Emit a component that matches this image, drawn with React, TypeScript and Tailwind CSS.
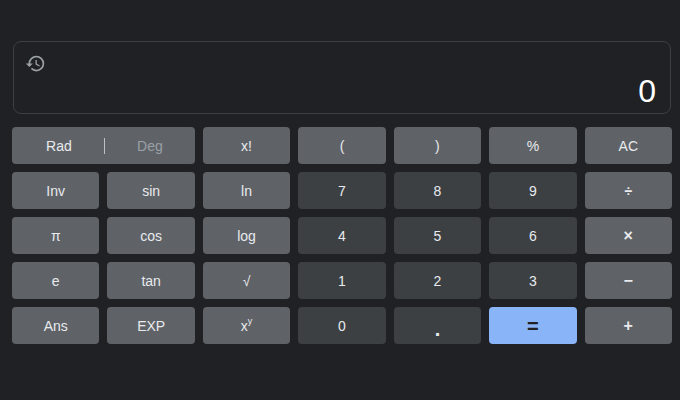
const light = "bg-[#5f6368] text-[#e8eaed]";
const dark = "bg-[#3c4043] text-[#e8eaed]";

type Key = { label: React.ReactNode; tone?: string; cls?: string };

function key(label: React.ReactNode, tone = light, cls = ""): Key {
  return { label, tone, cls };
}

const keys: Key[] = [
  key("x!"),
  key("("),
  key(")"),
  key("%"),
  key("AC"),
  key("Inv"),
  key("sin"),
  key("ln"),
  key("7", dark),
  key("8", dark),
  key("9", dark),
  key("÷", light, "font-bold"),
  key("π"),
  key("cos"),
  key("log"),
  key("4", dark),
  key("5", dark),
  key("6", dark),
  key("×", light, "font-bold text-[16px] pt-px"),
  key("e"),
  key("tan"),
  key("√"),
  key("1", dark),
  key("2", dark),
  key("3", dark),
  key("−", light, "font-bold text-[16px] pt-px"),
  key("Ans"),
  key("EXP"),
  key(
    <>
      x<sup className="text-[9px] -top-[5px]">y</sup>
    </>,
  ),
  key("0", dark),
  key(<span className="pt-[7px] text-[20px] font-bold">.</span>, dark),
  key(<span className="pt-px text-[20px] font-bold">=</span>, "bg-[#8ab4f8] text-[#202124]"),
  key("+", light, "font-bold text-[16px] pt-px"),
];

export default function App() {
  return (
    <main className="h-[400px] w-[680px] overflow-hidden bg-[#202124] pl-3 pr-2 pt-[41px] font-['Liberation_Sans',sans-serif] text-sm">
      <div className="mx-px mb-[13px] flex h-[73px] flex-col justify-between rounded-lg border border-[#3c4043] pl-[10px] pr-[14px] pb-[3px] pt-[10px]">
        <svg viewBox="0 0 24 24" className="h-[25px] w-[25px] -translate-x-px translate-y-px" fill="#9aa0a6">
          <path d="M13 3a9 9 0 0 0-9 9H1l3.89 3.89.07.14L9 12H6c0-3.87 3.13-7 7-7s7 3.13 7 7-3.13 7-7 7c-1.93 0-3.68-.79-4.94-2.06l-1.42 1.42A8.954 8.954 0 0 0 13 21a9 9 0 0 0 0-18zm-1 5v5l4.28 2.54.72-1.21-3.5-2.08V8H12z" />
        </svg>
        <div className="text-right text-[32px] leading-[37px] text-white">0</div>
      </div>
      <div className="grid grid-cols-7 gap-x-2 gap-y-2">
        <div className={`col-span-2 flex h-[37px] items-center rounded ${light}`}>
          <span className="flex-1 pl-0.5 text-center">Rad</span>
          <span className="h-4 w-px bg-[#bdc1c6]" />
          <span className="flex-1 text-center text-[#9aa0a6]">Deg</span>
        </div>
        {keys.map((k, i) => (
          <button
            key={i}
            className={`flex h-[37px] items-center justify-center rounded ${k.tone} ${k.cls}`}
          >
            {k.label}
          </button>
        ))}
      </div>
    </main>
  );
}
